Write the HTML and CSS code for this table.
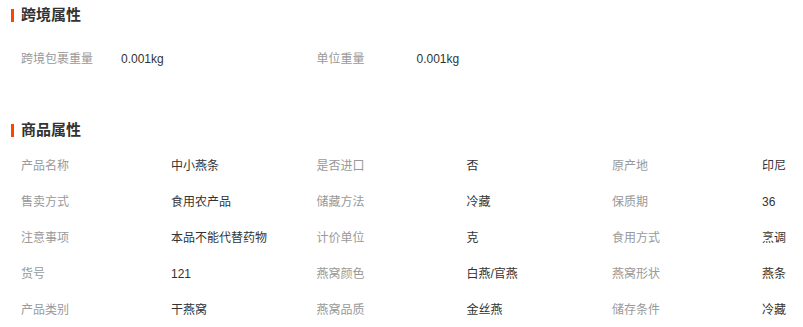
FILE: index.html
```html
<!DOCTYPE html>
<html lang="zh-CN">
<head>
<meta charset="utf-8">
<title>属性</title>
<link rel="stylesheet" href="styles.css">
</head>
<body>
<div class="page">
  <section class="section section-cross">
    <h2 class="title">跨境属性</h2>
    <div class="grid grid-cross">
      <div class="item"><span class="label">跨境包裹重量</span><span class="value">0.001kg</span></div>
      <div class="item"><span class="label">单位重量</span><span class="value">0.001kg</span></div>
    </div>
  </section>
  <section class="section section-goods">
    <h2 class="title">商品属性</h2>
    <div class="grid grid-goods">
      <div class="item"><span class="label">产品名称</span><span class="value">中小燕条</span></div>
      <div class="item"><span class="label">是否进口</span><span class="value">否</span></div>
      <div class="item"><span class="label">原产地</span><span class="value">印尼</span></div>
      <div class="item"><span class="label">售卖方式</span><span class="value">食用农产品</span></div>
      <div class="item"><span class="label">储藏方法</span><span class="value">冷藏</span></div>
      <div class="item"><span class="label">保质期</span><span class="value">36</span></div>
      <div class="item"><span class="label">注意事项</span><span class="value">本品不能代替药物</span></div>
      <div class="item"><span class="label">计价单位</span><span class="value">克</span></div>
      <div class="item"><span class="label">食用方式</span><span class="value">烹调</span></div>
      <div class="item"><span class="label">货号</span><span class="value">121</span></div>
      <div class="item"><span class="label">燕窝颜色</span><span class="value">白燕/官燕</span></div>
      <div class="item"><span class="label">燕窝形状</span><span class="value">燕条</span></div>
      <div class="item"><span class="label">产品类别</span><span class="value">干燕窝</span></div>
      <div class="item"><span class="label">燕窝品质</span><span class="value">金丝燕</span></div>
      <div class="item"><span class="label">储存条件</span><span class="value">冷藏</span></div>
    </div>
  </section>
</div>
</body>
</html>
```

FILE: styles.css
```css
html, body {
  margin: 0;
  padding: 0;
  overflow: hidden;
  background: #fff;
}
body {
  font-family: "Liberation Sans", "Noto Sans CJK SC", sans-serif;
  font-size: 12px;
  color: #333;
}
.page {
  padding-left: 11px;
}
.title {
  position: relative;
  margin: 0;
  padding-left: 10px;
  height: 20px;
  line-height: 20px;
  font-size: 15px;
  font-weight: bold;
  color: #333;
}
.title::before {
  content: "";
  position: absolute;
  left: 0;
  top: 4px;
  width: 3px;
  height: 13px;
  background: #ff4400;
}
.section-cross {
  padding-top: 5px;
}
.section-cross .grid {
  margin-top: 16px;
}
.section-goods {
  margin-top: 43px;
}
.section-goods .grid {
  margin-top: 8px;
}
.grid {
  display: grid;
  grid-template-columns: 295.5px 295.5px auto;
  padding-left: 10px;
}
.item {
  display: flex;
  height: 36px;
  line-height: 36px;
  white-space: nowrap;
}
.label {
  color: #999;
}
.value {
  color: #333;
}
.grid-cross .label {
  width: 100px;
}
.grid-goods .label {
  width: 150px;
}
```
